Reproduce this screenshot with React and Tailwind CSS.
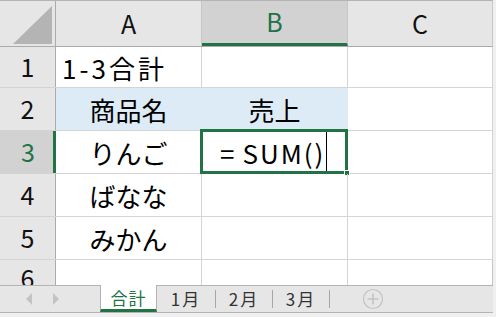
const font = { fontFamily: '"Noto Sans CJK JP", "Noto Sans", sans-serif' }

function Corner() {
  return (
    <div className="relative h-full w-[56px] shrink-0 border-r border-[#ababab] bg-[#e6e6e6]">
      <svg className="absolute left-0 top-0" width="56" height="46" viewBox="0 0 56 46">
        <polygon points="13,43 52,43 52,5" fill="#b4b4b4" />
      </svg>
    </div>
  )
}

function ColHead({ label, w, active }) {
  return (
    <div
      className={`flex h-full shrink-0 items-center justify-center border-r border-[#c6c6c6] text-[25px] ${w} ${
        active ? 'border-b-[3px] border-b-[#217346] bg-[#d2d2d2] text-[#217346]' : 'bg-[#e6e6e6] text-[#111]'
      }`}
    >
      {label}
    </div>
  )
}

function RowHead({ n, active }) {
  return (
    <div
      className={`flex h-full w-[56px] shrink-0 items-center justify-center border-r text-[25px] ${
        active
          ? 'border-r-[3px] border-r-[#217346] bg-[#d2d2d2] pl-[3px] text-[#217346]'
          : 'border-r-[#ababab] bg-[#e6e6e6] text-[#111]'
      }`}
    >
      {n}
    </div>
  )
}

function Cell({ w, children, fill, align = 'center', last }) {
  return (
    <div
      className={`relative flex h-full shrink-0 items-center border-r text-[26px] text-black ${w} ${
        fill ? 'bg-[#ddebf7] border-r-[#ddebf7]' : 'border-r-[#d4d4d4]'
      } ${align === 'center' ? 'justify-center' : 'justify-start pl-[6px] tracking-[3px]'} ${last ? 'border-r-[#c6c6c6]' : ''}`}
    >
      {children}
    </div>
  )
}

function Row({ n, h, active, a, b, fillA, fillB, alignA, bCell }) {
  return (
    <div className={`flex ${h} border-b border-[#d4d4d4]`}>
      <RowHead n={n} active={active} />
      <Cell w="w-[146px]" fill={fillA} align={alignA}>
        {a}
      </Cell>
      {bCell ? (
        bCell
      ) : (
        <Cell w="w-[146px]" fill={fillB}>
          {b}
        </Cell>
      )}
      <Cell w="w-[145px]" last />
    </div>
  )
}

function SelectedCell() {
  return (
    <div className="relative flex h-full w-[146px] shrink-0 items-center border-r border-[#d4d4d4] text-[26px] text-black">
      <span className="ml-[18px]">=</span>
      <span className="ml-[8px] tracking-[2px]">SUM()</span>
      <span className="ml-px h-[41px] w-px bg-black" />
      <div className="pointer-events-none absolute -left-[2px] -top-[2px] h-[45px] w-[148px] border-[3px] border-[#217346]" />
      <div className="absolute -bottom-[3px] -right-[3px] h-[6px] w-[6px] border border-white bg-[#217346]" />
    </div>
  )
}

function Sep() {
  return <span className="h-[18px] w-px bg-[#a6a6a6]" />
}

function TabBar() {
  return (
    <div className="flex h-[28px] items-stretch border-t border-b border-[#b4b4b4] bg-[#e6e6e6] text-[17px]">
      <div className="flex w-[100px] shrink-0 items-center">
        <span className="ml-[26px] h-0 w-0 border-y-[6px] border-r-[6px] border-y-transparent border-r-[#c3c3c3]" />
        <span className="ml-[21px] h-0 w-0 border-y-[6px] border-l-[6px] border-y-transparent border-l-[#c3c3c3]" />
      </div>
      <div className="-mt-px flex w-[57px] shrink-0 items-center justify-center border-x border-b-[3px] border-x-[#b4b4b4] border-b-[#217346] bg-white pt-[1px] tracking-[1px] text-[#217346]">
        合計
      </div>
      <div className="flex w-[58px] items-center justify-center tracking-[2px] text-[#333]">1月</div>
      <div className="flex items-center"><Sep /></div>
      <div className="flex w-[56px] items-center justify-center tracking-[2px] text-[#333]">2月</div>
      <div className="flex items-center"><Sep /></div>
      <div className="flex w-[56px] items-center justify-center tracking-[2px] text-[#333]">3月</div>
      <div className="flex items-center"><Sep /></div>
      <div className="ml-[32px] flex items-center">
        <svg width="22" height="22" viewBox="0 0 22 22">
          <circle cx="11" cy="11" r="9.5" fill="none" stroke="#c3c3c3" strokeWidth="1.2" />
          <path d="M11 5.5v11M5.5 11h11" stroke="#c3c3c3" strokeWidth="1.6" />
        </svg>
      </div>
    </div>
  )
}

export default function App() {
  return (
    <div className="h-[317px] w-[496px] overflow-hidden bg-[#f0f0f0]" style={font}>
      <div className="w-[493px] border-t border-[#b4b4b4] bg-white">
        <div className="flex h-[46px] border-b border-[#ababab]">
          <Corner />
          <ColHead label="A" w="w-[146px]" />
          <ColHead label="B" w="w-[146px]" active />
          <ColHead label="C" w="w-[145px]" />
        </div>
        <Row n="1" h="h-[41px]" a="1-3合計" alignA="left" />
        <Row n="2" h="h-[43px]" a="商品名" b="売上" fillA fillB />
        <Row n="3" h="h-[43px]" active a="りんご" bCell={<SelectedCell />} />
        <Row n="4" h="h-[43px]" a="ばなな" />
        <Row n="5" h="h-[43px]" a="みかん" />
        <div className="flex h-[25px] overflow-hidden">
          <div className="flex h-[40px] w-[56px] shrink-0 items-start justify-center border-r border-[#ababab] bg-[#e6e6e6] pt-[1px] text-[25px] leading-[32px] text-[#111]">
            6
          </div>
          <div className="h-full w-[146px] shrink-0 border-r border-[#d4d4d4]" />
          <div className="h-full w-[146px] shrink-0 border-r border-[#d4d4d4]" />
          <div className="h-full w-[145px] shrink-0 border-r border-[#c6c6c6]" />
        </div>
        <TabBar />
      </div>
    </div>
  )
}
